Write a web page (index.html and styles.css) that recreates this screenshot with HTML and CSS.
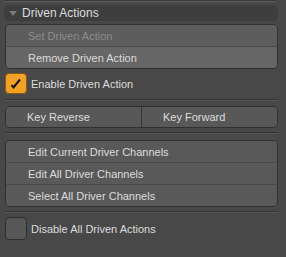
FILE: index.html
```html
<!DOCTYPE html>
<html lang="en">
<head>
    <meta charset="UTF-8">
    <title>Driven Actions</title>
    <link rel="stylesheet" href="styles.css">
</head>
<body>
    <div class="panel">
        <div class="prev"></div>
        <div class="header">
            <span class="arrow"></span>
            <span>Driven Actions</span>
        </div>

        <div class="group">
            <div class="row disabled">Set Driven Action</div>
            <div class="row light">Remove Driven Action</div>
        </div>

        <div class="check-row">
            <span class="box on">
                <svg width="14" height="14" viewBox="0 0 14 14">
                    <polyline points="2.5,8 4.5,10.5 11,2.5" fill="none" stroke="#111" stroke-width="2"/>
                </svg>
            </span>
            <span>Enable Driven Action</span>
        </div>

        <div class="sep"></div>

        <div class="split">
            <div class="cell">Key Reverse</div>
            <div class="cell">Key Forward</div>
        </div>

        <div class="sep tight"></div>

        <div class="group second">
            <div class="row">Edit Current Driver Channels</div>
            <div class="row">Edit All Driver Channels</div>
            <div class="row">Select All Driver Channels</div>
        </div>

        <div class="sep tight"></div>

        <div class="check-row last">
            <span class="box"></span>
            <span>Disable All Driven Actions</span>
        </div>
    </div>
</body>
</html>
```

FILE: styles.css
```css
body {
    margin: 0;
    width: 286px;
    height: 257px;
    overflow: hidden;
    background-color: #484848;
    font-family: "Liberation Sans", Arial, sans-serif;
    font-size: 11px;
    color: #dcdcdc;
}
.panel {
    padding: 0 8px 0 5px;
}
.prev {
    height: 1px;
    margin: 0 1px 0 -1px;
    background-color: #3b3b3b;
    border-bottom: 1px solid #5a5a5a;
    border-radius: 0 0 4px 4px;
}
.header {
    display: flex;
    align-items: center;
    height: 16px;
    margin: 3px 0 0 -1px;
    padding-left: 5px;
    background-color: #3e3e3e;
    border-radius: 5px;
    font-size: 12px;
}
.arrow {
    width: 0;
    height: 0;
    margin-right: 5px;
    border-left: 4px solid transparent;
    border-right: 4px solid transparent;
    border-top: 5px solid #7a7a7a;
}
.group {
    margin-top: 3px;
    border: 1px solid #303030;
    border-radius: 5px;
    overflow: hidden;
}
.row {
    display: flex;
    align-items: center;
    height: 21px;
    padding-left: 22px;
    background-color: #595959;
    border-top: 1px solid #4a4a4a;
}
.row:first-child {
    border-top: none;
}
.row.disabled {
    background-color: #5d5d5d;
    color: #8c8c8c;
}
.row.light {
    background-color: #666666;
}
.check-row {
    display: flex;
    align-items: center;
    margin-top: 4px;
    height: 21px;
}
.check-row.last {
    margin-top: 4px;
    height: 23px;
}
.box {
    display: flex;
    align-items: center;
    justify-content: center;
    box-sizing: border-box;
    width: 22px;
    height: 100%;
    margin-right: 4px;
    background-color: #575757;
    border: 1px solid #2e2e2e;
    border-radius: 4px;
}
.box.on {
    background-color: #f0a126;
    border-color: #8a5a14;
}
.sep {
    margin-top: 5px;
    border-top: 1px solid #363636;
    border-bottom: 1px solid #555555;
}
.sep.tight {
    margin-top: 4px;
}
.split {
    display: flex;
    margin-top: 5px;
    border: 1px solid #303030;
    border-radius: 5px;
    overflow: hidden;
}
.cell {
    flex: 1;
    display: flex;
    align-items: center;
    height: 20px;
    padding-left: 21px;
    background-color: #585858;
}
.cell + .cell {
    border-left: 1px solid #353535;
}
.second {
    margin-top: 6px;
}
```
